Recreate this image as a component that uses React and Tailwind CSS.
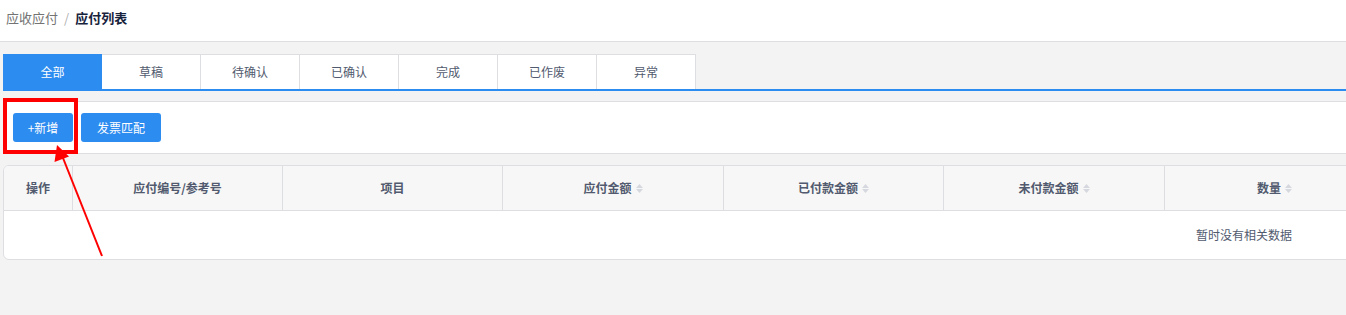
import React from 'react';

const tabs = ['全部', '草稿', '待确认', '已确认', '完成', '已作废', '异常'];

const columns = [
  { title: '操作', w: 'w-[69px]' },
  { title: '应付编号/参考号', w: 'w-[210px]' },
  { title: '项目', w: 'w-[220px]' },
  { title: '应付金额', w: 'w-[221px]', sort: true },
  { title: '已付款金额', w: 'w-[220px]', sort: true },
  { title: '未付款金额', w: 'w-[221px]', sort: true },
  { title: '数量', w: 'w-[220px]', sort: true },
  { title: '', w: 'w-[220px]' },
  { title: '', w: 'w-[220px]' },
  { title: '', w: 'w-[220px]' },
  { title: '', w: 'w-[220px]' },
  { title: '', w: 'w-[221px]' },
];

const SortIcon = () => (
  <span className="ml-1 inline-flex flex-col gap-[1px]">
    <svg width="7" height="4" viewBox="0 0 7 4"><path d="M3.5 0 7 4H0z" fill="#d5d8de" /></svg>
    <svg width="7" height="4" viewBox="0 0 7 4"><path d="M0 0h7L3.5 4z" fill="#d5d8de" /></svg>
  </span>
);

export default function App() {
  return (
    <div className="relative h-[315px] w-[1346px] overflow-hidden bg-[#f3f3f3] font-['Noto_Sans_CJK_SC',sans-serif] text-[12px] text-[#515a6e]">
      <div className="flex h-[42px] items-center border-b border-[#dcdee2] bg-white pb-[6px] pl-[6px] text-[13px]">
        <span className="text-[#737373]">应收应付</span>
        <span className="mx-[6px] text-[#b0b0b0]">/</span>
        <span className="font-bold text-[#17233d]">应付列表</span>
      </div>

      <div className="ml-[3px] mt-[12px] flex border-b-2 border-[#2d8cf0]">
        {tabs.map((t, i) => (
          <div
            key={t}
            className={
              i === 0
                ? 'flex h-[35px] w-[99px] items-center justify-center bg-[#2d8cf0] text-white'
                : 'flex h-[35px] w-[99px] items-center justify-center border-t border-r border-[#dcdee2] bg-white'
            }
          >
            {t}
          </div>
        ))}
      </div>

      <div className="ml-[3px] mt-[10px] flex h-[53px] items-center gap-[8px] rounded-l-[4px] border border-r-0 border-[#dcdee2] bg-white pl-[9px]">
        <button className="h-[29px] w-[60px] rounded-[3px] bg-[#2d8cf0] text-white">+新增</button>
        <button className="h-[29px] w-[80px] rounded-[3px] bg-[#2d8cf0] text-white">发票匹配</button>
      </div>

      <div className="ml-[3px] mt-[11px] w-[2482px] overflow-hidden rounded-[6px] border border-[#dcdee2] bg-white">
        <div className="flex h-[45px] border-b border-[#dcdee2] bg-[#f7f7f7] font-bold">
          {columns.map((c, i) => (
            <div
              key={i}
              className={`${c.w} flex shrink-0 items-center justify-center ${i < columns.length - 1 ? 'border-r border-[#dcdee2]' : ''}`}
            >
              {c.title}
              {c.sort && <SortIcon />}
            </div>
          ))}
        </div>
        <div className="flex h-[48px] items-center justify-center">暂时没有相关数据</div>
      </div>

      <div className="pointer-events-none absolute left-[3px] top-[98px] h-[56px] w-[75px] border-[4px] border-[#ff0000]" />
      <svg className="pointer-events-none absolute left-0 top-0" width="1346" height="315">
        <line x1="102" y1="256" x2="63" y2="158" stroke="#ff0000" strokeWidth="2" />
        <path d="M57 145 L54.5 162 L69 156.5 Z" fill="#ff0000" />
      </svg>
    </div>
  );
}
